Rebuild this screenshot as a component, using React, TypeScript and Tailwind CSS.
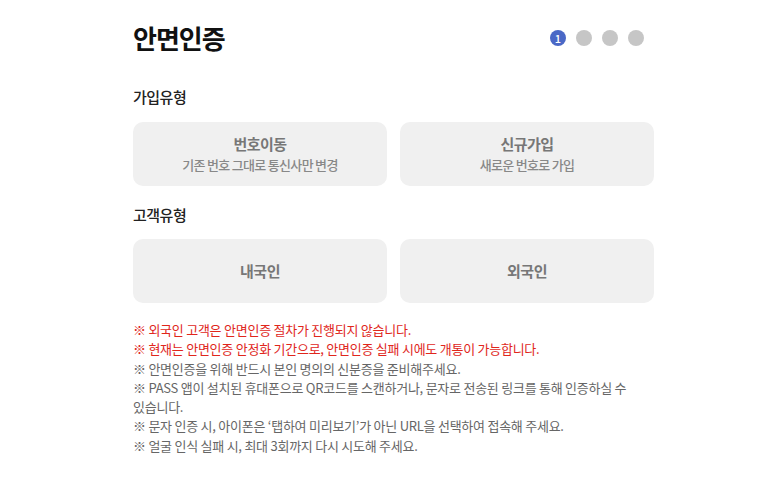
const font = { fontFamily: '"Noto Sans CJK KR", "Noto Sans", sans-serif' };

function Steps() {
  return (
    <div className="flex items-center gap-[10px] mr-[10px]">
      <div className="w-[16px] h-[16px] rounded-full bg-[#4a68c6] flex items-center justify-center text-white text-[11px] leading-none font-medium">
        1
      </div>
      <div className="w-[16px] h-[16px] rounded-full bg-[#c6c6c6]" />
      <div className="w-[16px] h-[16px] rounded-full bg-[#c6c6c6]" />
      <div className="w-[16px] h-[16px] rounded-full bg-[#c6c6c6]" />
    </div>
  );
}

function Choice({ title, sub }: { title: string; sub?: string }) {
  return (
    <button className="flex-1 h-[64px] rounded-[10px] bg-[#f0f0f0] flex flex-col items-center justify-center gap-[2px]">
      <span className="text-[15px] leading-[20px] font-bold text-[#777] tracking-[-0.5px]">{title}</span>
      {sub && <span className="text-[13px] leading-[18px] font-medium text-[#888] tracking-[-0.7px]">{sub}</span>}
    </button>
  );
}

export default function App() {
  return (
    <div className="w-[758px] h-[490px] bg-white" style={font}>
      <div className="ml-[133px] w-[521px] pt-[20px]">
        <div className="flex items-center justify-between h-[36px]">
          <h1 className="text-[26px] font-bold text-[#111] tracking-[-1px] leading-none">안면인증</h1>
          <Steps />
        </div>

        <h2 className="mt-[31px] text-[15px] leading-[20px] font-medium text-[#222] tracking-[-0.5px]">가입유형</h2>
        <div className="mt-[15px] flex gap-[13px]">
          <Choice title="번호이동" sub="기존 번호 그대로 통신사만 변경" />
          <Choice title="신규가입" sub="새로운 번호로 가입" />
        </div>

        <h2 className="mt-[19px] text-[15px] leading-[20px] font-medium text-[#222] tracking-[-0.5px]">고객유형</h2>
        <div className="mt-[14px] flex gap-[13px]">
          <Choice title="내국인" />
          <Choice title="외국인" />
        </div>

        <div className="mt-[17px] w-[505px] text-[13px] leading-[19.3px] tracking-[-0.25px] text-[#666]">
          <p className="text-[#e0261b]">※ 외국인 고객은 안면인증 절차가 진행되지 않습니다.</p>
          <p className="text-[#e0261b]">※ 현재는 안면인증 안정화 기간으로, 안면인증 실패 시에도 개통이 가능합니다.</p>
          <p>※ 안면인증을 위해 반드시 본인 명의의 신분증을 준비해주세요.</p>
          <p>※ PASS 앱이 설치된 휴대폰으로 QR코드를 스캔하거나, 문자로 전송된 링크를 통해 인증하실 수 있습니다.</p>
          <p>※ 문자 인증 시, 아이폰은 ‘탭하여 미리보기’가 아닌 URL을 선택하여 접속해 주세요.</p>
          <p>※ 얼굴 인식 실패 시, 최대 3회까지 다시 시도해 주세요.</p>
        </div>
      </div>
    </div>
  );
}
